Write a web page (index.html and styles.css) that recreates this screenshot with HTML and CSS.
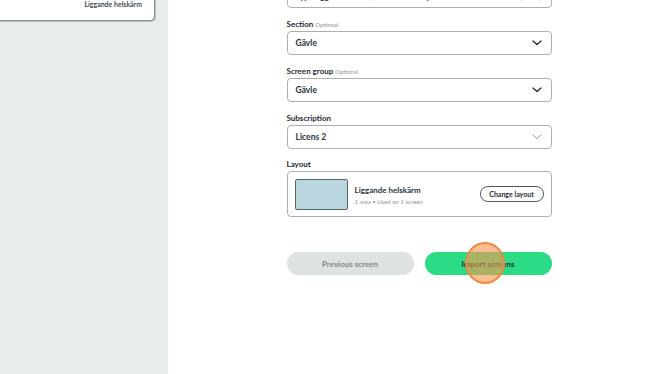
FILE: index.html
```html
<!DOCTYPE html>
<html>
<head>
<meta charset="utf-8">
<link rel="stylesheet" href="styles.css">
</head>
<body>
<div class="app">
  <aside class="sidebar">
    <div class="side-card">
      <span class="side-card-text">Liggande helskärm</span>
    </div>
  </aside>
  <main class="main">
    <div class="form">
      <div class="select select-top">
        <span class="select-value">Typ: Liggande skärm, 1920 x 1080 px</span>
        <span class="top-right">(16:9)</span>
      </div>

      <div class="field">
        <div class="label">Section <span class="optional">Optional</span></div>
        <div class="select">
          <span class="select-value">Gävle</span>
          <svg class="chev" width="10" height="6" viewBox="0 0 10 6"><path d="M1 1l4 3.6L9 1" fill="none" stroke="#1e2c35" stroke-width="1.3" stroke-linecap="round" stroke-linejoin="round"/></svg>
        </div>
      </div>

      <div class="field">
        <div class="label">Screen group <span class="optional">Optional</span></div>
        <div class="select">
          <span class="select-value">Gävle</span>
          <svg class="chev" width="10" height="6" viewBox="0 0 10 6"><path d="M1 1l4 3.6L9 1" fill="none" stroke="#1e2c35" stroke-width="1.3" stroke-linecap="round" stroke-linejoin="round"/></svg>
        </div>
      </div>

      <div class="field">
        <div class="label">Subscription</div>
        <div class="select">
          <span class="select-value">Licens 2</span>
          <svg class="chev" width="10" height="6" viewBox="0 0 10 6"><path d="M1 1l4 3.6L9 1" fill="none" stroke="#8e979b" stroke-width="1" stroke-linecap="round" stroke-linejoin="round"/></svg>
        </div>
      </div>

      <div class="field field-layout">
        <div class="label">Layout</div>
        <div class="layout-box">
          <div class="thumb"></div>
          <div class="layout-info">
            <div class="layout-title">Liggande helskärm</div>
            <div class="layout-sub">1 area • Used on 1 screen</div>
          </div>
          <button class="change-btn">Change layout</button>
        </div>
      </div>

      <div class="actions">
        <button class="btn btn-prev">Previous screen</button>
        <button class="btn btn-import">Import screens
          <span class="click-dot"></span>
        </button>
      </div>
    </div>
  </main>
</div>
</body>
</html>
```

FILE: styles.css
```css
* { box-sizing: border-box; }
html, body { margin: 0; padding: 0; }
body {
  font-family: "Lato", "Noto Sans", sans-serif;
  color: #1c2a33;
  width: 670px;
  height: 374px;
  overflow: hidden;
  background: #ffffff;
}
.app {
  display: flex;
  height: 374px;
}
.sidebar {
  width: 168px;
  flex: none;
  background: #e9eced;
  padding-right: 13px;
}
.side-card {
  margin-left: -10px;
  height: 21px;
  background: #ffffff;
  border: 1px solid #7f8d8e;
  border-top: none;
  border-radius: 0 0 5px 0;
  box-shadow: 1px 1px 0 #b6c0c1;
  display: flex;
  justify-content: flex-end;
  align-items: flex-start;
  padding: 0 12px 0 0;
}
.side-card-text {
  font-size: 7px;
  font-weight: 600;
  line-height: 8px;
  color: #2a3941;
}
.main {
  flex: 1;
  display: flex;
  justify-content: center;
}
.form {
  width: 265px;
  margin-top: -16px;
  display: flex;
  flex-direction: column;
}
.select {
  height: 24px;
  border: 1px solid #a7b1b4;
  border-radius: 4px;
  display: flex;
  align-items: center;
  justify-content: space-between;
  padding: 0 9px 0 8px;
  background: #fff;
}
.select-value {
  font-size: 8.5px;
  font-weight: 700;
  color: #26353e;
}
.top-right {
  font-size: 8.5px;
  font-weight: 700;
  color: #26353e;
}
.chev { display: block; }
.field {
  margin-top: 11px;
  display: flex;
  flex-direction: column;
}
.field-layout { margin-top: 10px; }
.label {
  font-size: 8px;
  font-weight: 700;
  line-height: 11px;
  margin-bottom: 1px;
  color: #1c2a33;
}
.optional {
  font-size: 6px;
  font-weight: 400;
  color: #8d979b;
}
.layout-box {
  height: 46px;
  border: 1px solid #a7b1b4;
  border-radius: 4px;
  display: flex;
  align-items: center;
  padding: 0 7px 0 7px;
}
.thumb {
  width: 53px;
  height: 31px;
  background: #b9d6df;
  border: 1px solid #56666c;
  border-radius: 2px;
  flex: none;
}
.layout-info {
  flex: 1;
  margin-left: 7px;
  display: flex;
  flex-direction: column;
  gap: 3px;
  padding-top: 1px;
}
.layout-title {
  font-size: 8px;
  font-weight: 700;
  color: #26353e;
}
.layout-sub {
  font-size: 6px;
  color: #8d979b;
}
.change-btn {
  font-family: inherit;
  height: 16px;
  width: 64px;
  border: 1px solid #4a585f;
  background: #fff;
  border-radius: 8px;
  font-size: 7px;
  font-weight: 700;
  color: #1c2a33;
  padding: 0;
  margin-top: -1px;
}
.actions {
  margin-top: 35px;
  display: flex;
  gap: 11px;
}
.btn {
  font-family: inherit;
  flex: 1;
  height: 23px;
  border: none;
  border-radius: 12px;
  font-size: 8px;
  font-weight: 700;
  padding: 0;
}
.btn-prev {
  background: #dde2e3;
  color: #7d878b;
}
.btn-import {
  background: #2bdc85;
  color: #1c2a33;
  position: relative;
}
.click-dot {
  position: absolute;
  left: 40px;
  top: -10px;
  width: 40px;
  height: 42px;
  border-radius: 50%;
  background: rgba(247, 150, 80, 0.62);
  border: 2px solid #ec8a40;
}
```
